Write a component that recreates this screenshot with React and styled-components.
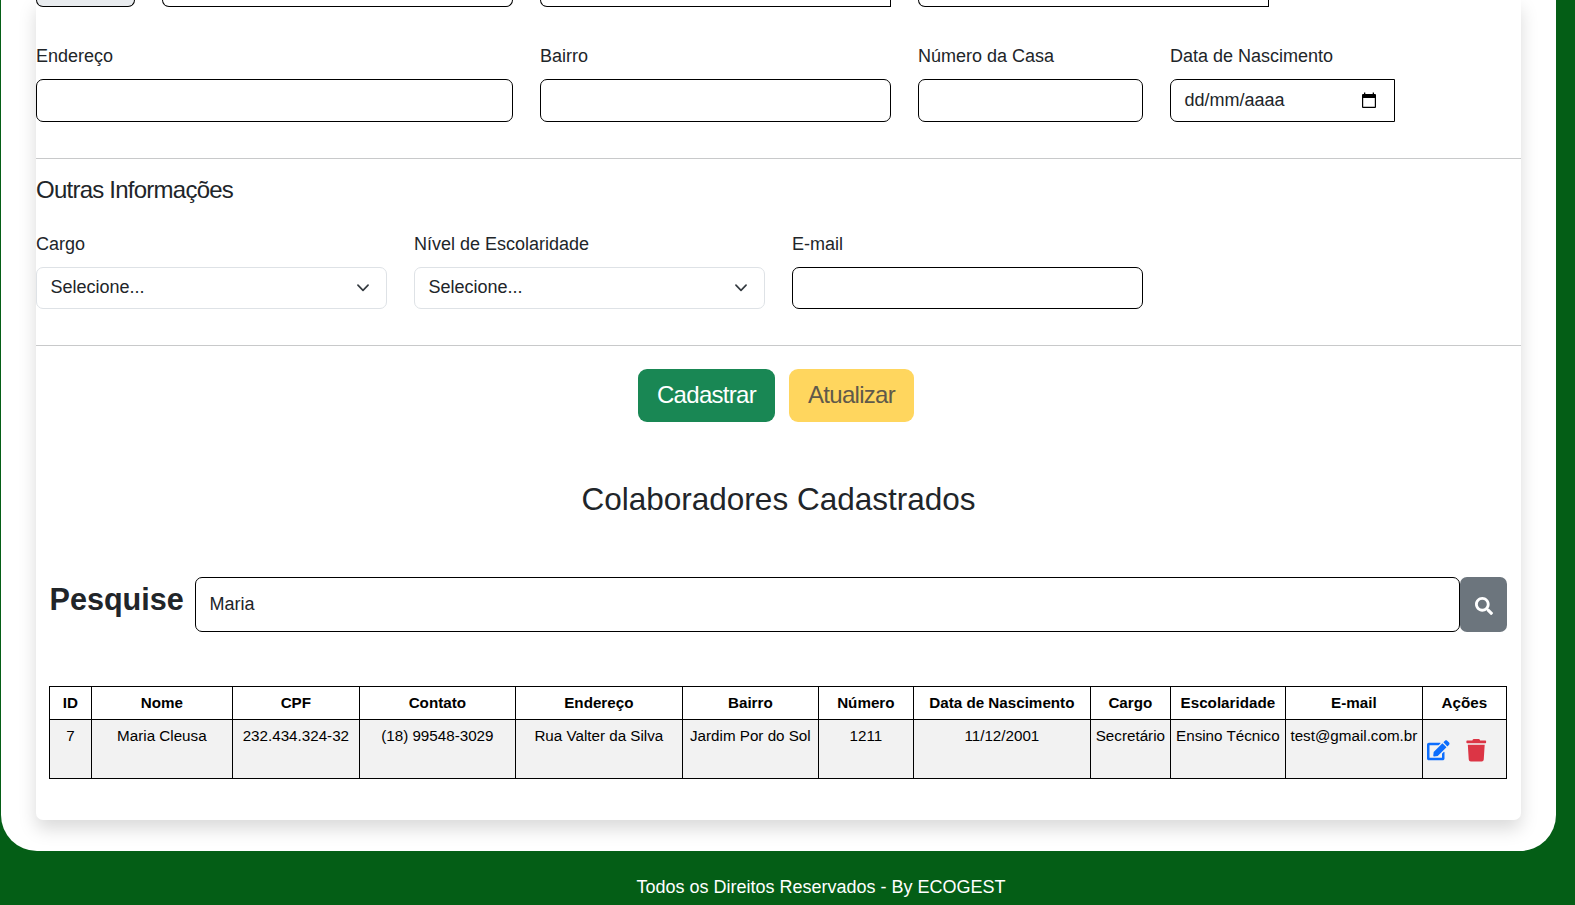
import React from "react";
import styled, { createGlobalStyle } from "styled-components";
import { FaEdit, FaSearch, FaTrash } from "react-icons/fa";

const GlobalStyle = createGlobalStyle`
  *, *::before, *::after { box-sizing: border-box; }
  body {
    margin: 0;
    background: #045e16;
    color: #212529;
    font-family: "Liberation Sans", Arial, sans-serif;
    font-size: 18px;
    line-height: 27px;
    overflow: hidden;
  }
`;

const Page = styled.div`
  height: 905px;
  padding: 0 19px 0 1px;
  overflow: hidden;
`;

const Panel = styled.main`
  height: 851px;
  padding: 0 35px 31px;
  background: #fff;
  border-radius: 0 0 36px 36px;
`;

const Card = styled.section`
  height: 820px;
  display: flex;
  flex-direction: column;
  background: #fff;
  border-radius: 0 0 7px 7px;
  box-shadow: 0 9px 18px rgba(0, 0, 0, 0.15);
`;

const FieldRow = styled.div`
  display: flex;
  gap: 27px;
  margin-top: ${(p) => p.$top || 0}px;
`;

const Field = styled.div`
  width: ${(p) => p.$width}px;
  display: flex;
  flex-direction: column;
`;

const Label = styled.label`
  height: 27px;
  margin-bottom: 9px;
  white-space: nowrap;
`;

const Control = styled.div`
  height: 43px;
  display: flex;
  align-items: center;
  justify-content: space-between;
  padding: 0 17px 0 13.5px;
  background: ${(p) => (p.$disabled ? "#e9ecef" : "#fff")};
  border: 1px solid #000;
  border-radius: ${(p) => (p.$squareEnd ? "7px 0 0 7px" : "7px")};
`;

const CutControl = styled(Control)`
  height: 7px;
  padding: 0;
  width: ${(p) => p.$width}px;
  border-top: 0;
  border-radius: ${(p) => (p.$squareEnd ? "0 0 0 7px" : "0 0 7px 7px")};
`;

const ShortControl = styled(Control)`
  height: 42px;
`;

const SelectControl = styled(ShortControl)`
  align-items: flex-start;
  padding: 6px 14px 0 13.5px;
  border-color: #dee2e6;

  svg {
    margin-top: 7px;
  }
`;

const Divider = styled.hr`
  width: 100%;
  height: 1px;
  margin: ${(p) => p.$top}px 0 0;
  border: 0;
  background: #c8c9ca;
`;

const SectionTitle = styled.h5`
  margin: 17px 0 0;
  font-size: 24px;
  font-weight: 400;
  line-height: 28px;
  letter-spacing: -0.76px;
`;

const Actions = styled.div`
  display: flex;
  gap: 14px;
  margin: 23px 0 0 602px;
`;

const Button = styled.button`
  width: ${(p) => p.$width}px;
  height: 53px;
  padding: 0 0 2px;
  border: 0;
  border-radius: 9px;
  font: 400 24px/50px "Liberation Sans", Arial, sans-serif;
  letter-spacing: -0.7px;
  color: ${(p) => (p.$warning ? "#60594a" : "#fff")};
  background: ${(p) => (p.$warning ? "#ffd65e" : "#198754")};
`;

const ListTitle = styled.h3`
  margin: 58px 0 0;
  text-align: center;
  font-size: 31.5px;
  font-weight: 400;
  line-height: 38px;
`;

const SearchRow = styled.div`
  display: flex;
  margin: 59px 14px 0 13px;
`;

const SearchLabel = styled.strong`
  width: 146px;
  padding-left: 0.5px;
  font-size: 30.6px;
  line-height: 44px;
`;

const SearchInput = styled(Control)`
  width: 1265px;
  height: 55px;
`;

const SearchButton = styled.button`
  width: 47px;
  height: 55px;
  display: flex;
  align-items: center;
  justify-content: center;
  padding: 3px 0 0;
  border: 0;
  border-radius: 7px;
  background: #6c757d;
  color: #fff;
  font-size: 18px;
`;

const Table = styled.table`
  width: 1458px;
  margin: 54px 0 0 13px;
  table-layout: fixed;
  border-spacing: 0;
  border: solid #000;
  border-width: 1px 0 0 1px;
  color: #000;
  font-size: 15.2px;
  line-height: 23px;
  text-align: center;
  white-space: nowrap;
`;

const HeadCell = styled.th`
  height: 33px;
  padding: 0 0.3px 2px 0;
  border: solid #000;
  border-width: 0 1px 1px 0;
`;

const Cell = styled.td`
  height: 59px;
  padding: 4px 0.3px 0 0;
  vertical-align: top;
  background: #f2f2f2;
  border: solid #000;
  border-width: 0 1px 1px 0;
`;

const RowActions = styled.div`
  display: flex;
  gap: 15px;
  padding: 15px 0 0 4.4px;
  font-size: 22.5px;
`;

const EditIcon = styled(FaEdit)`
  color: #0d6efd;
`;

const TrashIcon = styled(FaTrash)`
  color: #dc3545;
`;

const Footer = styled.footer`
  padding: 23px 0 0 85px;
  text-align: center;
  color: #fff;
`;

const Chevron = () => (
  <svg width="18" height="13.5" viewBox="0 0 16 16" fill="none" stroke="#343a40" strokeWidth="2" strokeLinecap="round" strokeLinejoin="round">
    <path d="m2 5 6 6 6-6" />
  </svg>
);

const Calendar = () => (
  <svg width="16" height="18" viewBox="0 0 16 18">
    <path fill="#000" d="M3 .500h1.300v1.500h7.400V.500H13V2h1q1 0 1 1v12q0 1-1 1H2q-1 0-1-1V3q0-1 1-1h1zM2.200 6v8.800h11.600V6z" />
  </svg>
);

const columns = [
  ["ID", "7", 42],
  ["Nome", "Maria Cleusa", 141],
  ["CPF", "232.434.324-32", 127],
  ["Contato", "(18) 99548-3029", 156],
  ["Endereço", "Rua Valter da Silva", 167],
  ["Bairro", "Jardim Por do Sol", 136],
  ["Número", "1211", 95],
  ["Data de Nascimento", "11/12/2001", 177],
  ["Cargo", "Secretário", 80],
  ["Escolaridade", "Ensino Técnico", 115],
  ["E-mail", "test@gmail.com.br", 137],
];

export default function App() {
  return (
    <>
      <GlobalStyle />
      <Page>
        <Panel>
          <Card>
            <FieldRow>
              <CutControl $width={99} $disabled />
              <CutControl $width={351} />
              <CutControl $width={351} $squareEnd />
              <CutControl $width={351} $squareEnd />
            </FieldRow>

            <FieldRow $top={36}>
              <Field $width={477}>
                <Label>Endereço</Label>
                <Control />
              </Field>
              <Field $width={351}>
                <Label>Bairro</Label>
                <Control />
              </Field>
              <Field $width={225}>
                <Label>Número da Casa</Label>
                <Control />
              </Field>
              <Field $width={225}>
                <Label>Data de Nascimento</Label>
                <Control $squareEnd>
                  <span>dd/mm/aaaa</span>
                  <Calendar />
                </Control>
              </Field>
            </FieldRow>

            <Divider $top={36} />
            <SectionTitle>Outras Informações</SectionTitle>

            <FieldRow $top={27}>
              <Field $width={351}>
                <Label>Cargo</Label>
                <SelectControl>
                  <span>Selecione...</span>
                  <Chevron />
                </SelectControl>
              </Field>
              <Field $width={351}>
                <Label>Nível de Escolaridade</Label>
                <SelectControl>
                  <span>Selecione...</span>
                  <Chevron />
                </SelectControl>
              </Field>
              <Field $width={351}>
                <Label>E-mail</Label>
                <ShortControl />
              </Field>
            </FieldRow>

            <Divider $top={36} />
            <Actions>
              <Button $width={137}>Cadastrar</Button>
              <Button $width={125} $warning>Atualizar</Button>
            </Actions>

            <ListTitle>Colaboradores Cadastrados</ListTitle>

            <SearchRow>
              <SearchLabel>Pesquise</SearchLabel>
              <SearchInput>Maria</SearchInput>
              <SearchButton aria-label="Pesquisar">
                <FaSearch />
              </SearchButton>
            </SearchRow>

            <Table>
              <colgroup>
                {columns.map(([title, , width]) => (
                  <col key={title} width={width} />
                ))}
                <col width={84} />
              </colgroup>
              <thead>
                <tr>
                  {columns.map(([title]) => (
                    <HeadCell key={title}>{title}</HeadCell>
                  ))}
                  <HeadCell>Ações</HeadCell>
                </tr>
              </thead>
              <tbody>
                <tr>
                  {columns.map(([title, value]) => (
                    <Cell key={title}>{value}</Cell>
                  ))}
                  <Cell>
                    <RowActions>
                      <EditIcon />
                      <TrashIcon />
                    </RowActions>
                  </Cell>
                </tr>
              </tbody>
            </Table>
          </Card>
        </Panel>
        <Footer>Todos os Direitos Reservados - By ECOGEST</Footer>
      </Page>
    </>
  );
}
